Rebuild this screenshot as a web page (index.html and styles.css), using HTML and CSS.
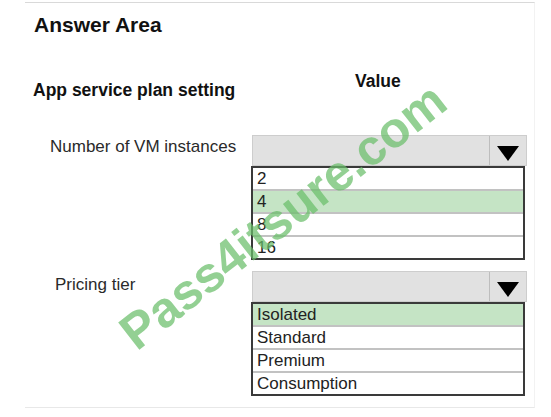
FILE: index.html
```html
<!DOCTYPE html>
<html lang="en">
<head>
<meta charset="UTF-8">
<title>Answer Area</title>
<link rel="stylesheet" href="styles.css">
</head>
<body>

<div class="page">
  <h1 class="title">Answer Area</h1>

  <div class="row head">
    <div class="setting">App service plan setting</div>
    <div class="value">Value</div>
  </div>

  <div class="row">
    <div class="label vm">Number of VM instances</div>
    <div class="control">
      <div class="select"><span class="arrow"></span></div>
      <ul class="options">
        <li>2</li>
        <li class="picked">4</li>
        <li>8</li>
        <li>16</li>
      </ul>
    </div>
  </div>

  <div class="row second">
    <div class="label tier">Pricing tier</div>
    <div class="control">
      <div class="select"><span class="arrow"></span></div>
      <ul class="options">
        <li class="picked">Isolated</li>
        <li>Standard</li>
        <li>Premium</li>
        <li>Consumption</li>
      </ul>
    </div>
  </div>

  <div class="mark">Pass4itsure.com</div>
</div>

</body>
</html>
```

FILE: styles.css
```css
html,body { margin:0; padding:0; background:#fff; font-family:'Liberation Sans',Arial,sans-serif; color:#222; }

.page { position:relative; box-sizing:border-box; width:510px; height:406px; margin:2px 0 0 25px;
  border-top:1px solid #d9d9d9; border-bottom:1px solid #e8e8e8; border-right:1px solid #f2f2f2; padding-top:10px; }

.title { margin:0 0 0 9px; font-size:21px; line-height:24px; font-weight:bold; color:#111; }

.row { display:grid; grid-template-columns:227px 275px; align-items:start; margin-top:34px; }
.row.second { margin-top:11px; }

.head { font-size:17.5px; line-height:21px; font-weight:bold; color:#111; }
.head .setting { padding:9px 0 0 8px; }
.head .value { padding-left:103px; }

.label { font-size:17px; line-height:20px; color:#2a2a2a; padding-top:2px; }
.label.vm { padding-left:25px; }
.label.tier { padding-left:30px; padding-top:4px; }

.select { position:relative; box-sizing:border-box; height:31px; background:#e1e1e1; border:1px solid #cdcdcd; }
.arrow { position:absolute; top:0; right:0; bottom:0; width:36px; border-left:1px solid #bdbdbd; }
.arrow::after { content:''; position:absolute; left:7px; top:10px; border-left:11px solid transparent; border-right:11px solid transparent; border-top:15px solid #000; }

.options { list-style:none; margin:0 2px 0 -1px; padding:0; border:2px solid #3a3a3a; }
.options li { height:21px; font-size:17px; line-height:21px; padding-left:4px; border-top:2px solid #c2c2c2; }
.options li:first-child { border-top:0; }
.options li.picked { background:#c5e4c5; }

.mark { position:absolute; left:58px; top:188px; width:400px; text-align:center; transform:rotate(-38deg);
  font-size:50px; font-weight:bold; line-height:50px; color:rgba(105,190,105,0.72); pointer-events:none; white-space:nowrap; }
```
